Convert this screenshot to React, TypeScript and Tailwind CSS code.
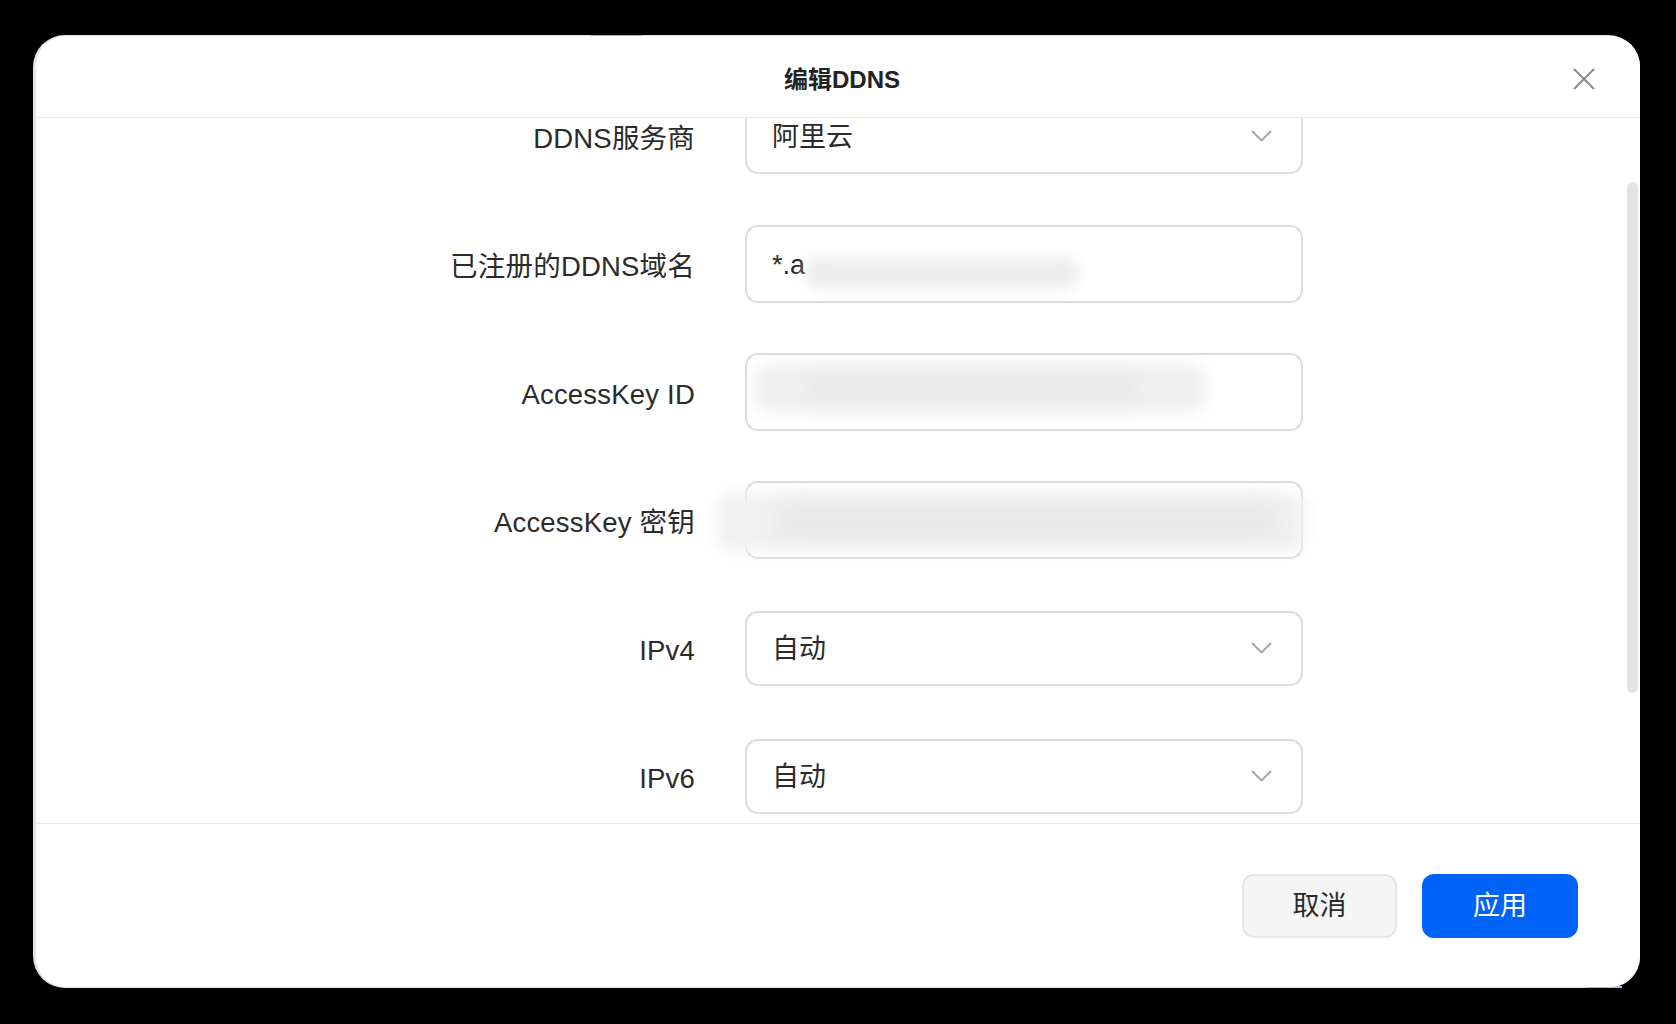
import React from "react";

function Chevron() {
  return (
    <svg width="21" height="12" viewBox="0 0 21 12" fill="none">
      <polyline points="1.5,1.5 10.5,10.5 19.5,1.5" stroke="#a9a9a9" strokeWidth="2" strokeLinecap="round" strokeLinejoin="round" />
    </svg>
  );
}

function SelectBox({ value }: { value: string }) {
  return (
    <div className="w-[558px] h-[75px] rounded-[13px] border-2 border-[#dcdcdc] bg-white flex items-center justify-between pl-[25px] pr-[29px]">
      <span className="pt-[3px] text-[27px] text-[#2b2b2b] leading-none">{value}</span>
      <Chevron />
    </div>
  );
}

function TextBox({ children }: { children?: React.ReactNode }) {
  return (
    <div className="relative w-[558px] h-[78px] rounded-[13px] border-2 border-[#dcdcdc] bg-white flex items-center pl-[25px]">
      {children}
    </div>
  );
}

function Row({ label, children }: { label: string; children: React.ReactNode }) {
  return (
    <div className="flex items-center h-[78px] mb-[50px]">
      <div className="w-[300px] ml-[359px] pt-[6px] text-right text-[27.5px] text-[#2b2b2b] leading-none whitespace-nowrap tracking-[0.2px]">{label}</div>
      <div className="ml-[50px]">{children}</div>
    </div>
  );
}

export default function App() {
  const scrollRef = (el: HTMLDivElement | null) => {
    if (el) el.scrollTop = 87;
  };

  return (
    <div className="w-[1676px] h-[1024px] bg-black pt-[35px] pl-[33px] overflow-hidden font-['Liberation_Sans','Noto_Sans_CJK_SC',sans-serif]">
      <div className="relative w-[1607px] h-[953px] rounded-[32px] bg-[#e4e4e4] pt-[1px] pl-[3px]">
        <div className="absolute left-[558px] top-0 w-[51px] h-[2px] bg-[#8fa6ee]" />
        <div className="absolute left-[1553px] bottom-0 w-[36px] h-[2px] bg-[#a9b7ea]" />
        <div className="relative w-[1604px] h-[951px] rounded-[30px] bg-white flex flex-col overflow-hidden">
          {/* Header */}
          <div className="relative h-[82px] shrink-0 border-b border-[#e6e6e6] flex items-center justify-center">
            <div className="pt-[6px] pl-[8px] text-[24px] font-semibold text-[#222222] leading-none">编辑DDNS</div>
            <button className="absolute right-[45px] top-[32px] w-[22px] h-[22px] flex items-center justify-center">
              <svg width="22" height="22" viewBox="0 0 22 22" fill="none">
                <line x1="1.5" y1="1.5" x2="20.5" y2="20.5" stroke="#8a8a8a" strokeWidth="2" strokeLinecap="round" />
                <line x1="20.5" y1="1.5" x2="1.5" y2="20.5" stroke="#8a8a8a" strokeWidth="2" strokeLinecap="round" />
              </svg>
            </button>
          </div>

          {/* Body */}
          <div className="relative flex-1 min-h-0">
            <div ref={scrollRef} className="h-full overflow-y-scroll [scrollbar-width:none]">
              <div className="pt-[66px] pb-[139px]">
                <Row label="DDNS服务商">
                  <SelectBox value="阿里云" />
                </Row>
                <Row label="已注册的DDNS域名">
                  <TextBox>
                    <span className="pt-[3px] text-[27px] text-[#2b2b2b] leading-none">*.a</span>
                    <div className="absolute left-[60px] top-[30px] w-[270px] h-[32px] rounded-[10px] bg-[#ededed] blur-[6px]" />
                  </TextBox>
                </Row>
                <Row label="AccessKey ID">
                  <TextBox>
                    <div className="absolute left-[8px] top-[9px] w-[450px] h-[48px] rounded-[14px] bg-[#f0f0f0] blur-[7px]" />
                    <div className="absolute left-[60px] top-[17px] w-[330px] h-[30px] rounded-[10px] bg-[#e9e9e9] blur-[8px]" />
                  </TextBox>
                </Row>
                <Row label="AccessKey 密钥">
                  <TextBox>
                    <div className="absolute left-[-30px] top-[10px] w-[588px] h-[58px] rounded-[14px] bg-[#f1f1f1] blur-[7px]" />
                    <div className="absolute left-[30px] top-[18px] w-[500px] h-[40px] rounded-[12px] bg-[#e9e9e9] blur-[9px]" />
                  </TextBox>
                </Row>
                <Row label="IPv4">
                  <SelectBox value="自动" />
                </Row>
                <Row label="IPv6">
                  <SelectBox value="自动" />
                </Row>
              </div>
            </div>
            <div className="absolute right-[2px] top-[64px] w-[11px] h-[511px] rounded-full bg-[#e4e4e4]" />
          </div>

          {/* Footer */}
          <div className="h-[164px] shrink-0 border-t border-[#e6e6e6] flex items-center justify-end pr-[62px] gap-[25px]">
            <button className="w-[155px] h-[64px] rounded-[12px] bg-[#f5f5f5] border-2 border-[#e6e6e6] pt-[2px] text-[27px] text-[#2b2b2b] leading-none">取消</button>
            <button className="w-[156px] h-[64px] rounded-[12px] bg-[#0063f7] pt-[2px] text-[27px] text-white leading-none">应用</button>
          </div>
        </div>
      </div>
    </div>
  );
}
